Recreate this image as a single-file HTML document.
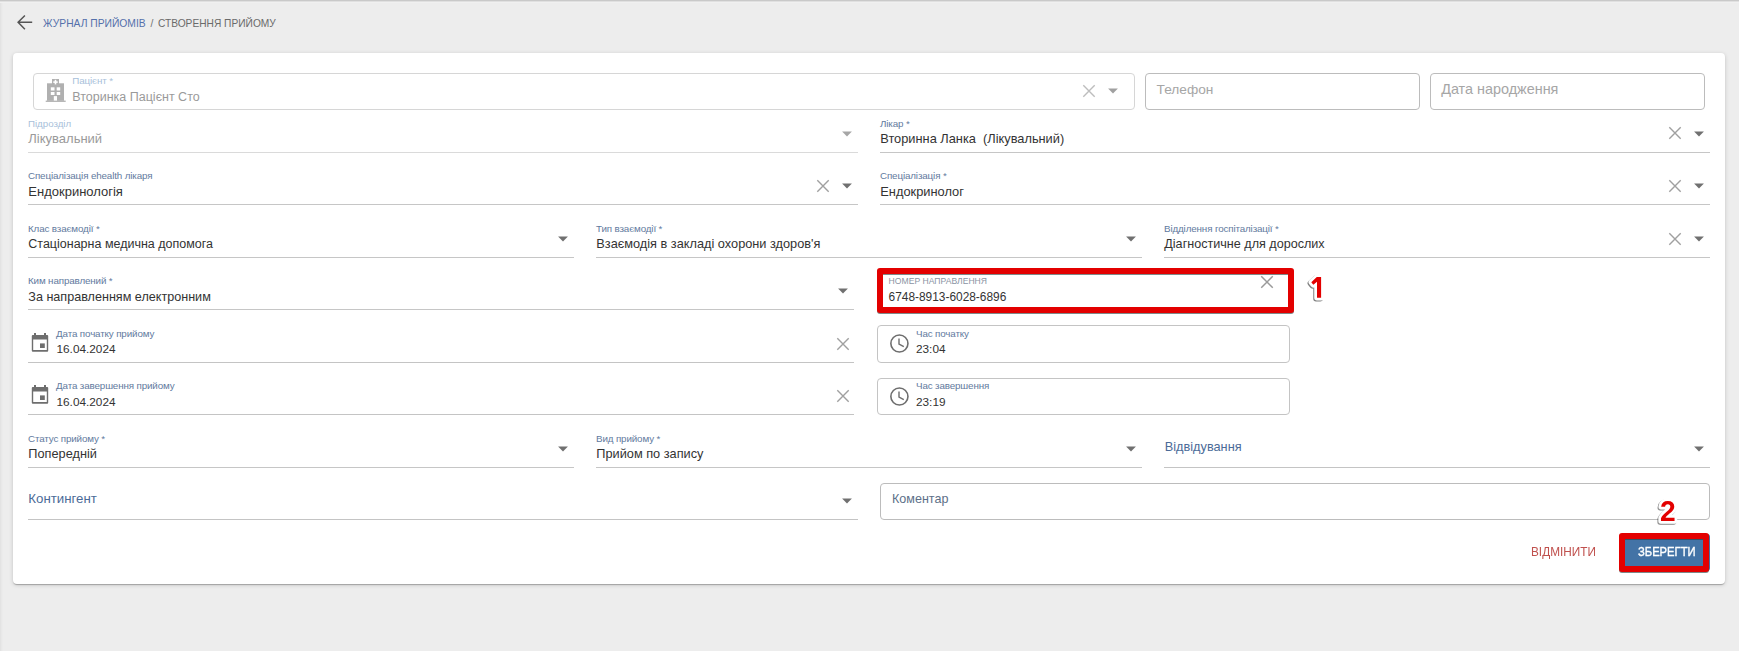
<!DOCTYPE html>
<html><head><meta charset="utf-8"><style>
html,body{margin:0;padding:0}
body{width:1739px;height:651px;overflow:hidden;position:relative;background:#ededed;font-family:"Liberation Sans",sans-serif}
.t{position:absolute;white-space:pre}
.r{position:absolute;display:block}
</style></head><body>
<div class="r" style="left:0;top:0;width:3px;height:651px;background:linear-gradient(90deg,#e3e3e3 0,#e3e3e3 1px,#e8e8e8 1px,#e8e8e8 2px,#ebebeb 2px)"></div>
<div class="r" style="left:0;top:0;width:1739px;height:3px;background:linear-gradient(180deg,#c9c9c9 0,#c9c9c9 1px,#e0e0e0 1px,#e0e0e0 2px,#f0f0f0 2px)"></div>
<svg class="r" style="left:14px;top:12px" width="22" height="22" viewBox="0 0 22 22"><path d="M18.2 10.3H4.3M10.9 3.5L4.1 10.3l6.8 6.9" stroke="#555" stroke-width="1.5" fill="none"/></svg>
<div class="t" style="left:43.00px;top:19px;font-size:10.3px;line-height:10.3px;color:#5470ab;font-weight:400;">ЖУРНАЛ ПРИЙОМІВ</div>
<div class="t" style="left:150.50px;top:19px;font-size:10.3px;line-height:10.3px;color:#707070;font-weight:400;">/</div>
<div class="t" style="left:158.00px;top:19px;font-size:10.2px;line-height:10.2px;color:#6a6a6a;font-weight:400;">СТВОРЕННЯ ПРИЙОМУ</div>
<div class="r" style="left:13px;top:53px;width:1712px;height:531px;background:#fff;border-radius:4px;box-shadow:0 1px 4px rgba(0,0,0,.16),0 1px 1px rgba(0,0,0,.14),0 2px 1px -1px rgba(0,0,0,.12)"></div>
<div class="r" style="left:33px;top:73px;width:1102px;height:37px;border:1px solid #d6d6d6;border-radius:4px;box-sizing:border-box"></div>
<svg class="r" style="left:40px;top:74px" width="30" height="32" viewBox="0 0 30 32"><g fill="#b0b0b0"><rect x="12" y="5" width="7" height="5"/><rect x="7" y="9.3" width="17" height="17.5"/><rect x="5.7" y="26.6" width="20" height="1.3"/></g><g fill="#fff"><rect x="14.7" y="5.8" width="1.6" height="4.6"/><rect x="13.3" y="7.3" width="4.4" height="1.6"/><rect x="10.8" y="13.3" width="3.7" height="3.2"/><rect x="16.7" y="13.3" width="3.5" height="3.2"/><rect x="10.8" y="18" width="3.7" height="3"/><rect x="16.7" y="18" width="3.5" height="3"/><rect x="13.8" y="22.1" width="3.2" height="4.5"/></g></svg>
<div class="t" style="left:72.30px;top:76px;font-size:9.8px;line-height:9.8px;color:#a8bfda;font-weight:400;letter-spacing:-0.13px;">Пацієнт *</div>
<div class="t" style="left:72.30px;top:91px;font-size:12.5px;line-height:12.5px;color:#9a9a9a;font-weight:400;">Вторинка Пацієнт Сто</div>
<svg class="r" style="left:1079px;top:80.5px" width="20" height="20" viewBox="0 0 20 20"><path d="M4.3 4.3L15.7 15.7M15.7 4.3L4.3 15.7" stroke="#bdbdbd" stroke-width="1.4" fill="none"/></svg>
<svg class="r" style="left:1103px;top:81px" width="20" height="20" viewBox="0 0 20 20"><path d="M5.1 7.5L14.9 7.5L10 12.5Z" fill="#a0a0a0"/></svg>
<div class="r" style="left:1145px;top:73px;width:275px;height:37px;border:1px solid #bcbcbc;border-radius:4px;box-sizing:border-box"></div>
<div class="t" style="left:1156.60px;top:83px;font-size:13.7px;line-height:13.7px;color:#a6a6a6;font-weight:400;">Телефон</div>
<div class="r" style="left:1430px;top:73px;width:275px;height:37px;border:1px solid #bcbcbc;border-radius:4px;box-sizing:border-box"></div>
<div class="t" style="left:1441.20px;top:82px;font-size:14.4px;line-height:14.4px;color:#a6a6a6;font-weight:400;">Дата народження</div>
<div class="t" style="left:28.00px;top:119px;font-size:9.7px;line-height:9.7px;color:#a8bfda;font-weight:400;">Підрозділ</div>
<div class="t" style="left:28.30px;top:132px;font-size:13.0px;line-height:13.0px;color:#9a9a9a;font-weight:400;">Лікувальний</div>
<div class="r" style="left:28px;top:152px;width:830px;height:1px;background:#dadada"></div>
<svg class="r" style="left:837px;top:123.6px" width="20" height="20" viewBox="0 0 20 20"><path d="M5.1 7.5L14.9 7.5L10 12.5Z" fill="#a6a6a6"/></svg>
<div class="t" style="left:880.00px;top:119px;font-size:9.8px;line-height:9.8px;color:#627a9e;font-weight:400;letter-spacing:-0.13px;">Лікар *</div>
<div class="t" style="left:880.30px;top:133px;font-size:12.8px;line-height:12.8px;color:#333333;font-weight:400;">Вторинна Ланка&nbsp; (Лікувальний)</div>
<div class="r" style="left:880px;top:152px;width:830px;height:1px;background:#c6c6c6"></div>
<svg class="r" style="left:1664.8px;top:123.35px" width="20" height="20" viewBox="0 0 20 20"><path d="M4.3 4.3L15.7 15.7M15.7 4.3L4.3 15.7" stroke="#a0a0a0" stroke-width="1.4" fill="none"/></svg>
<svg class="r" style="left:1689px;top:123.6px" width="20" height="20" viewBox="0 0 20 20"><path d="M5.1 7.5L14.9 7.5L10 12.5Z" fill="#707070"/></svg>
<div class="t" style="left:28.00px;top:171px;font-size:9.8px;line-height:9.8px;color:#627a9e;font-weight:400;letter-spacing:-0.13px;">Спеціалізація ehealth лікаря</div>
<div class="t" style="left:28.30px;top:185px;font-size:13.0px;line-height:13.0px;color:#333333;font-weight:400;">Ендокринологія</div>
<div class="r" style="left:28px;top:204px;width:830px;height:1px;background:#c6c6c6"></div>
<svg class="r" style="left:812.5px;top:175.6px" width="20" height="20" viewBox="0 0 20 20"><path d="M4.3 4.3L15.7 15.7M15.7 4.3L4.3 15.7" stroke="#a0a0a0" stroke-width="1.4" fill="none"/></svg>
<svg class="r" style="left:837px;top:175.8px" width="20" height="20" viewBox="0 0 20 20"><path d="M5.1 7.5L14.9 7.5L10 12.5Z" fill="#707070"/></svg>
<div class="t" style="left:880.00px;top:171px;font-size:9.8px;line-height:9.8px;color:#627a9e;font-weight:400;letter-spacing:-0.13px;">Спеціалізація *</div>
<div class="t" style="left:880.30px;top:186px;font-size:12.85px;line-height:12.85px;color:#333333;font-weight:400;">Ендокринолог</div>
<div class="r" style="left:880px;top:204px;width:830px;height:1px;background:#c6c6c6"></div>
<svg class="r" style="left:1664.8px;top:175.6px" width="20" height="20" viewBox="0 0 20 20"><path d="M4.3 4.3L15.7 15.7M15.7 4.3L4.3 15.7" stroke="#a0a0a0" stroke-width="1.4" fill="none"/></svg>
<svg class="r" style="left:1689px;top:175.5px" width="20" height="20" viewBox="0 0 20 20"><path d="M5.1 7.5L14.9 7.5L10 12.5Z" fill="#707070"/></svg>
<div class="t" style="left:28.00px;top:224px;font-size:9.8px;line-height:9.8px;color:#627a9e;font-weight:400;letter-spacing:-0.13px;">Клас взаємодії *</div>
<div class="t" style="left:28.30px;top:238px;font-size:12.5px;line-height:12.5px;color:#333333;font-weight:400;">Стаціонарна медична допомога</div>
<div class="r" style="left:28px;top:257px;width:546px;height:1px;background:#c6c6c6"></div>
<svg class="r" style="left:553px;top:228.8px" width="20" height="20" viewBox="0 0 20 20"><path d="M5.1 7.5L14.9 7.5L10 12.5Z" fill="#707070"/></svg>
<div class="t" style="left:596.00px;top:224px;font-size:9.8px;line-height:9.8px;color:#627a9e;font-weight:400;letter-spacing:-0.13px;">Тип взаємодії *</div>
<div class="t" style="left:596.30px;top:238px;font-size:12.75px;line-height:12.75px;color:#333333;font-weight:400;">Взаємодія в закладі охорони здоров'я</div>
<div class="r" style="left:596px;top:257px;width:546px;height:1px;background:#c6c6c6"></div>
<svg class="r" style="left:1121px;top:228.6px" width="20" height="20" viewBox="0 0 20 20"><path d="M5.1 7.5L14.9 7.5L10 12.5Z" fill="#707070"/></svg>
<div class="t" style="left:1164.00px;top:224px;font-size:9.8px;line-height:9.8px;color:#627a9e;font-weight:400;letter-spacing:-0.13px;">Відділення госпіталізації *</div>
<div class="t" style="left:1164.30px;top:238px;font-size:12.6px;line-height:12.6px;color:#333333;font-weight:400;">Діагностичне для дорослих</div>
<div class="r" style="left:1164px;top:257px;width:546px;height:1px;background:#c6c6c6"></div>
<svg class="r" style="left:1664.8px;top:228.6px" width="20" height="20" viewBox="0 0 20 20"><path d="M4.3 4.3L15.7 15.7M15.7 4.3L4.3 15.7" stroke="#a0a0a0" stroke-width="1.4" fill="none"/></svg>
<svg class="r" style="left:1689px;top:228.6px" width="20" height="20" viewBox="0 0 20 20"><path d="M5.1 7.5L14.9 7.5L10 12.5Z" fill="#707070"/></svg>
<div class="t" style="left:28.00px;top:276px;font-size:9.8px;line-height:9.8px;color:#627a9e;font-weight:400;letter-spacing:-0.13px;">Ким направлений *</div>
<div class="t" style="left:28.30px;top:291px;font-size:12.6px;line-height:12.6px;color:#333333;font-weight:400;">За направленням електронним</div>
<div class="r" style="left:28px;top:309px;width:826px;height:1px;background:#c6c6c6"></div>
<svg class="r" style="left:833px;top:280.7px" width="20" height="20" viewBox="0 0 20 20"><path d="M5.1 7.5L14.9 7.5L10 12.5Z" fill="#707070"/></svg>
<svg class="r" style="left:31px;top:333px" width="18" height="20" viewBox="0 0 18 20"><path fill-rule="evenodd" fill="#6e6e6e" d="M1.8 2H16.2Q17.2 2 17.2 3V17.8Q17.2 18.8 16.2 18.8H1.8Q0.8 18.8 0.8 17.8V3Q0.8 2 1.8 2ZM2.2 6.4V17H15.8V6.4Z"/><rect x="3" y="0" width="2" height="2.5" fill="#6e6e6e"/><rect x="13" y="0" width="2" height="2.5" fill="#6e6e6e"/><rect x="9" y="10.4" width="4.8" height="4.6" fill="#6e6e6e"/></svg>
<div class="t" style="left:56.10px;top:329px;font-size:9.8px;line-height:9.8px;color:#627a9e;font-weight:400;letter-spacing:-0.13px;">Дата початку прийому</div>
<div class="t" style="left:56.50px;top:344px;font-size:11.8px;line-height:11.8px;color:#333333;font-weight:400;">16.04.2024</div>
<div class="r" style="left:28px;top:362px;width:826px;height:1px;background:#c4c4c4"></div>
<svg class="r" style="left:833px;top:333.8px" width="20" height="20" viewBox="0 0 20 20"><path d="M4.3 4.3L15.7 15.7M15.7 4.3L4.3 15.7" stroke="#a0a0a0" stroke-width="1.4" fill="none"/></svg>
<svg class="r" style="left:31px;top:385px" width="18" height="20" viewBox="0 0 18 20"><path fill-rule="evenodd" fill="#6e6e6e" d="M1.8 2H16.2Q17.2 2 17.2 3V17.8Q17.2 18.8 16.2 18.8H1.8Q0.8 18.8 0.8 17.8V3Q0.8 2 1.8 2ZM2.2 6.4V17H15.8V6.4Z"/><rect x="3" y="0" width="2" height="2.5" fill="#6e6e6e"/><rect x="13" y="0" width="2" height="2.5" fill="#6e6e6e"/><rect x="9" y="10.4" width="4.8" height="4.6" fill="#6e6e6e"/></svg>
<div class="t" style="left:56.10px;top:381px;font-size:9.8px;line-height:9.8px;color:#627a9e;font-weight:400;letter-spacing:-0.13px;">Дата завершення прийому</div>
<div class="t" style="left:56.50px;top:397px;font-size:11.8px;line-height:11.8px;color:#333333;font-weight:400;">16.04.2024</div>
<div class="r" style="left:28px;top:414px;width:826px;height:1px;background:#c4c4c4"></div>
<svg class="r" style="left:833px;top:385.6px" width="20" height="20" viewBox="0 0 20 20"><path d="M4.3 4.3L15.7 15.7M15.7 4.3L4.3 15.7" stroke="#a0a0a0" stroke-width="1.4" fill="none"/></svg>
<div class="r" style="left:877px;top:325px;width:413px;height:38px;border:1px solid #c4c4c4;border-radius:4px;box-sizing:border-box"></div>
<svg class="r" style="left:888px;top:332px" width="22" height="22" viewBox="0 0 22 22"><circle cx="11.4" cy="11.5" r="8.55" fill="none" stroke="#6e6e6e" stroke-width="1.6"/><path d="M11 6.6V12L15.8 14.6" fill="none" stroke="#6e6e6e" stroke-width="1.4"/></svg>
<div class="t" style="left:916.00px;top:329px;font-size:9.8px;line-height:9.8px;color:#627a9e;font-weight:400;letter-spacing:-0.13px;">Час початку</div>
<div class="t" style="left:916.00px;top:344px;font-size:11.8px;line-height:11.8px;color:#333333;font-weight:400;">23:04</div>
<div class="r" style="left:877px;top:378px;width:413px;height:37px;border:1px solid #c4c4c4;border-radius:4px;box-sizing:border-box"></div>
<svg class="r" style="left:888px;top:384.5px" width="22" height="22" viewBox="0 0 22 22"><circle cx="11.4" cy="11.5" r="8.55" fill="none" stroke="#6e6e6e" stroke-width="1.6"/><path d="M11 6.6V12L15.8 14.6" fill="none" stroke="#6e6e6e" stroke-width="1.4"/></svg>
<div class="t" style="left:916.00px;top:381px;font-size:9.8px;line-height:9.8px;color:#627a9e;font-weight:400;letter-spacing:-0.13px;">Час завершення</div>
<div class="t" style="left:916.00px;top:397px;font-size:11.8px;line-height:11.8px;color:#333333;font-weight:400;">23:19</div>
<div class="r" style="left:877px;top:268px;width:417px;height:45px;border:6px solid #e30000;border-radius:3px;box-sizing:border-box;filter:drop-shadow(0 1px 0.6px rgba(40,60,60,.6))"></div>
<div class="t" style="left:888.60px;top:277px;font-size:8.6px;line-height:8.6px;color:#8a93a3;font-weight:400;">НОМЕР НАПРАВЛЕННЯ</div>
<div class="t" style="left:888.60px;top:292px;font-size:11.9px;line-height:11.9px;color:#333333;font-weight:400;">6748-8913-6028-6896</div>
<svg class="r" style="left:1257px;top:271.5px" width="20" height="20" viewBox="0 0 20 20"><path d="M4.25 4.25L15.75 15.75M15.75 4.25L4.25 15.75" stroke="#9a9a9a" stroke-width="1.5" fill="none"/></svg>
<div class="t" style="left:28.00px;top:434px;font-size:9.8px;line-height:9.8px;color:#627a9e;font-weight:400;letter-spacing:-0.13px;">Статус прийому *</div>
<div class="t" style="left:28.30px;top:448px;font-size:12.75px;line-height:12.75px;color:#333333;font-weight:400;">Попередній</div>
<div class="r" style="left:28px;top:467px;width:546px;height:1px;background:#c6c6c6"></div>
<svg class="r" style="left:553px;top:438.7px" width="20" height="20" viewBox="0 0 20 20"><path d="M5.1 7.5L14.9 7.5L10 12.5Z" fill="#707070"/></svg>
<div class="t" style="left:596.00px;top:434px;font-size:9.8px;line-height:9.8px;color:#627a9e;font-weight:400;letter-spacing:-0.13px;">Вид прийому *</div>
<div class="t" style="left:596.30px;top:448px;font-size:12.75px;line-height:12.75px;color:#333333;font-weight:400;">Прийом по запису</div>
<div class="r" style="left:596px;top:467px;width:546px;height:1px;background:#c6c6c6"></div>
<svg class="r" style="left:1121px;top:438.7px" width="20" height="20" viewBox="0 0 20 20"><path d="M5.1 7.5L14.9 7.5L10 12.5Z" fill="#707070"/></svg>
<div class="r" style="left:1164px;top:467px;width:546px;height:1px;background:#c4c4c4"></div>
<div class="t" style="left:1164.70px;top:441px;font-size:12.75px;line-height:12.75px;color:#4b6b98;font-weight:400;">Відвідування</div>
<svg class="r" style="left:1689px;top:438.7px" width="20" height="20" viewBox="0 0 20 20"><path d="M5.1 7.5L14.9 7.5L10 12.5Z" fill="#707070"/></svg>
<div class="r" style="left:28px;top:519px;width:830px;height:1px;background:#c4c4c4"></div>
<div class="t" style="left:28.30px;top:492px;font-size:13.25px;line-height:13.25px;color:#4b6b98;font-weight:400;">Контингент</div>
<svg class="r" style="left:837px;top:490.5px" width="20" height="20" viewBox="0 0 20 20"><path d="M5.1 7.5L14.9 7.5L10 12.5Z" fill="#707070"/></svg>
<div class="r" style="left:880px;top:483px;width:830px;height:37px;border:1px solid #bcbcbc;border-radius:4px;box-sizing:border-box"></div>
<div class="t" style="left:892.00px;top:493px;font-size:12.55px;line-height:12.55px;color:#5d6f88;font-weight:400;">Коментар</div>
<div class="t" style="left:1530.60px;top:546px;font-size:12.4px;line-height:12.4px;color:#c0504d;font-weight:400;transform:scaleX(0.952);transform-origin:0 0;">ВІДМІНИТИ</div>
<div class="r" style="left:1620px;top:534px;width:90px;height:37px;background:#4373a6;border-radius:3px"></div>
<div class="t" style="left:1637.50px;top:546px;font-size:12.2px;line-height:12.2px;color:#ffffff;font-weight:400;-webkit-text-stroke:0.35px #fff;transform:scaleX(0.92);transform-origin:0 0;">ЗБЕРЕГТИ</div>
<div class="r" style="left:1619px;top:533px;width:90px;height:39px;border:6px solid #e30000;border-radius:3px;box-sizing:border-box;filter:drop-shadow(0 1px 0.6px rgba(40,60,60,.6))"></div>
<svg class="r" style="left:1300px;top:266px;overflow:visible" width="40" height="40" viewBox="1300 266 40 40"><path d="M1321.1 276.9V297.8H1317V281.7L1313.3 284.8L1311.3 282.3L1316.8 276.9Z" fill="#e30000" stroke="#fff" stroke-width="5.5" stroke-linejoin="round" paint-order="stroke" style="filter:drop-shadow(-0.4px 1.4px 0.5px rgba(0,0,0,.5))"/></svg>
<svg class="r" style="left:1650.4px;top:481px;overflow:visible" width="50" height="50"><g transform="translate(10 0) scale(0.94 1)"><text x="0" y="40" font-family="Liberation Sans" font-weight="700" font-size="30" fill="#e30000" stroke="#ffffff" stroke-width="5.5" stroke-linejoin="round" paint-order="stroke" style="filter:drop-shadow(-0.4px 1.4px 0.5px rgba(0,0,0,.45))">2</text></g></svg>
</body></html>
